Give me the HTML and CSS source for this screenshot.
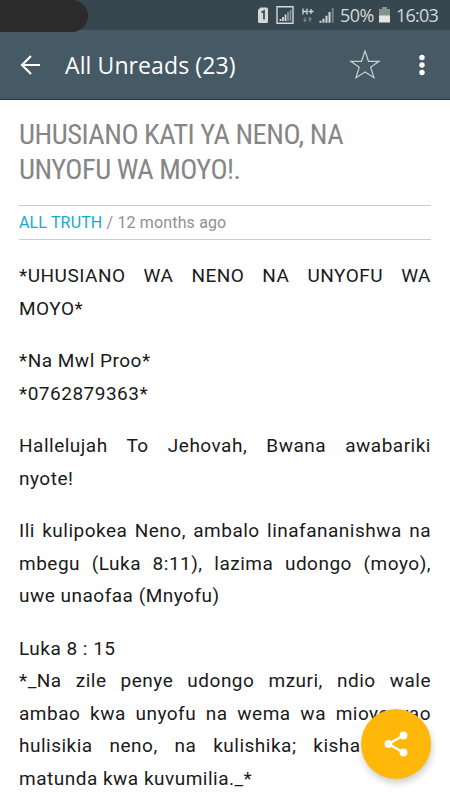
FILE: index.html
```html
<!DOCTYPE html>
<html lang="sw">
<head>
    <meta charset="UTF-8">
    <meta name="viewport" content="width=device-width, initial-scale=1.0">
    <title>All Unreads (23)</title>
    <link rel="stylesheet" href="styles.css">
</head>
<body>
    <div class="status-bar">
        <svg class="status-icons" width="90" height="30" viewBox="0 0 90 30">
            <path d="M4.500 7.500h6q1.500 0 1.500 1.500v12.500q0 1.500-1.500 1.500H3.500Q2 23 2 21.500V10z" fill="#d3d8da"/>
            <path d="M5.500 12.500l2.500-1.500v8.500" fill="none" stroke="#37474f" stroke-width="1.700"/>
            <path d="M21 6.700h16v16.600H21z" fill="none" stroke="#d3d8da" stroke-width="1.400"/>
            <path d="M24.500 21v-2M27 21v-4M29.500 21v-6.500" stroke="#d3d8da" stroke-width="1.800"/>
            <path d="M32 21v-9M34.500 21V10" stroke="#87928f" stroke-width="1.800"/>
            <path d="M47 8.500v6M51 8.500v6M47 11.500h4M52.500 11.500h5M55 9v5" stroke="#d3d8da" stroke-width="1.300"/>
            <path d="M49 17v4M47.500 19.500l1.500 2 1.500-2M54 22v-4M52.500 19.500l1.500-2 1.500 2" fill="none" stroke="#75838a" stroke-width="1.200"/>
            <path d="M64.500 22.700v-2M67.500 22.700v-4M70.500 22.700v-7M73.500 22.700V12" stroke="#d3d8da" stroke-width="2"/>
            <path d="M76.700 22.700V8" stroke="#75838a" stroke-width="2"/>
        </svg>
        <span class="battery-text">50%</span>
        <svg class="battery" width="11" height="30" viewBox="0 0 11 30">
            <path d="M3 7h5v2h3v7H0V9h3z" fill="#87928f"/>
            <path d="M0 15.500h11v7H0z" fill="#e3e6e7"/>
        </svg>
        <span class="clock">16:03</span>
        <div class="recorder"></div>
    </div>

    <header class="toolbar">
        <svg class="back" width="22" height="22" viewBox="0 0 22 22">
            <path d="M20 11H2M11 2L2 11l9 9" fill="none" stroke="#fff" stroke-width="2.200"/>
        </svg>
        <h1 class="toolbar-title">All Unreads (23)</h1>
        <svg class="star" width="32" height="32" viewBox="0 0 32 32">
            <path d="M16 2l3.500 10.300H30l-8.400 6L25 28.700l-9-5.700-9 5.700 3.200-10.400L1.800 12.300h10.700z" fill="none" stroke="#c8ced1" stroke-width="1.200"/>
        </svg>
        <svg class="more" width="6" height="22" viewBox="0 0 6 22">
            <circle cx="3" cy="3.500" r="2.700" fill="#fff"/>
            <circle cx="3" cy="11" r="2.700" fill="#fff"/>
            <circle cx="3" cy="18.500" r="2.700" fill="#fff"/>
        </svg>
    </header>

    <article class="article">
        <h2 class="article-title">UHUSIANO KATI YA NENO, NA<br>UNYOFU WA MOYO!.</h2>
        <div class="article-meta"><span class="source">ALL TRUTH</span> / 12 months ago</div>

        <p>*UHUSIANO WA NENO NA UNYOFU WA MOYO*</p>
        <p>*Na Mwl Proo*<br>*0762879363*</p>
        <p>Hallelujah To Jehovah, Bwana awabariki nyote!</p>
        <p>Ili kulipokea Neno, ambalo linafananishwa na mbegu (Luka 8:11), lazima udongo (moyo), uwe unaofaa (Mnyofu)</p>
        <p>Luka 8 : 15<br>*_Na zile penye udongo mzuri, ndio wale ambao kwa unyofu na wema wa mioyo yao hulisikia neno, na kulishika; kisha huzaa matunda kwa kuvumilia._*</p>
    </article>

    <button class="fab" aria-label="Share">
        <svg width="26" height="28" viewBox="0 0 26 28">
            <path d="M20.500 5.500L5.500 14l15 8.500" fill="none" stroke="#fff" stroke-width="2.300"/>
            <circle cx="20.500" cy="5.500" r="3.900" fill="#fff"/>
            <circle cx="5.500" cy="14" r="3.900" fill="#fff"/>
            <circle cx="20.500" cy="22.500" r="3.900" fill="#fff"/>
        </svg>
    </button>
</body>
</html>
```

FILE: styles.css
```css
* {
    box-sizing: border-box;
}
body {
    margin: 0;
    height: 800px;
    overflow: hidden;
    background: #fff;
    font-family: Roboto, sans-serif;
}
.status-bar {
    position: relative;
    display: flex;
    align-items: center;
    height: 30px;
    padding-left: 256px;
    background: #37474f;
    color: #d3d8da;
    font-family: "Open Sans", sans-serif;
    font-size: 18px;
    line-height: 30px;
    white-space: nowrap;
}
.status-icons,
.battery {
    flex: none;
}
.battery-text {
    width: 33px;
    margin-left: -6px;
    letter-spacing: -0.5px;
}
.battery {
    margin-left: 6px;
}
.clock {
    margin-left: 6px;
    letter-spacing: -0.8px;
}
.recorder {
    position: absolute;
    z-index: 1;
    left: 0;
    top: 0;
    width: 88px;
    height: 32px;
    background: #2b2b2b;
    border-radius: 0 16px 16px 0;
}
.toolbar {
    display: flex;
    align-items: center;
    height: 70px;
    padding: 0 25px 0 20px;
    background: #455a64;
    border-bottom: 1px solid #1c3745;
}
.toolbar-title {
    flex: 1;
    margin: 0 0 0 23px;
    color: #fff;
    font-family: "Open Sans", sans-serif;
    font-size: 23px;
    font-weight: 500;
    letter-spacing: 0.1px;
    white-space: nowrap;
}
.star {
    margin-right: 38px;
}
.article {
    padding: 17px 19px 0;
    color: #1a1a1a;
}
.article-title {
    margin: 0;
    color: #868686;
    font-family: Roboto, sans-serif;
    font-size: 28.5px;
    font-stretch: 75%;
    font-weight: 400;
    line-height: 35px;
    letter-spacing: -0.5px;
    white-space: nowrap;
}
.article-meta {
    height: 35px;
    margin: 18px 0 20px;
    border-top: 1px solid #ccc;
    border-bottom: 1px solid #ccc;
    color: #909090;
    font-size: 16px;
    line-height: 33px;
    letter-spacing: 0.15px;
}
.source {
    color: #14a9cf;
}
.article p {
    margin: 0 0 20px;
    font-size: 19px;
    line-height: 32.5px;
    letter-spacing: 0.5px;
    text-align: justify;
}
.fab {
    position: fixed;
    left: 361px;
    top: 709px;
    display: flex;
    align-items: center;
    justify-content: center;
    width: 70px;
    height: 70px;
    padding: 0;
    border: none;
    border-radius: 50%;
    background: #ffb709;
    box-shadow: 1px 4px 7px rgba(0,0,0,0.2);
}
```
